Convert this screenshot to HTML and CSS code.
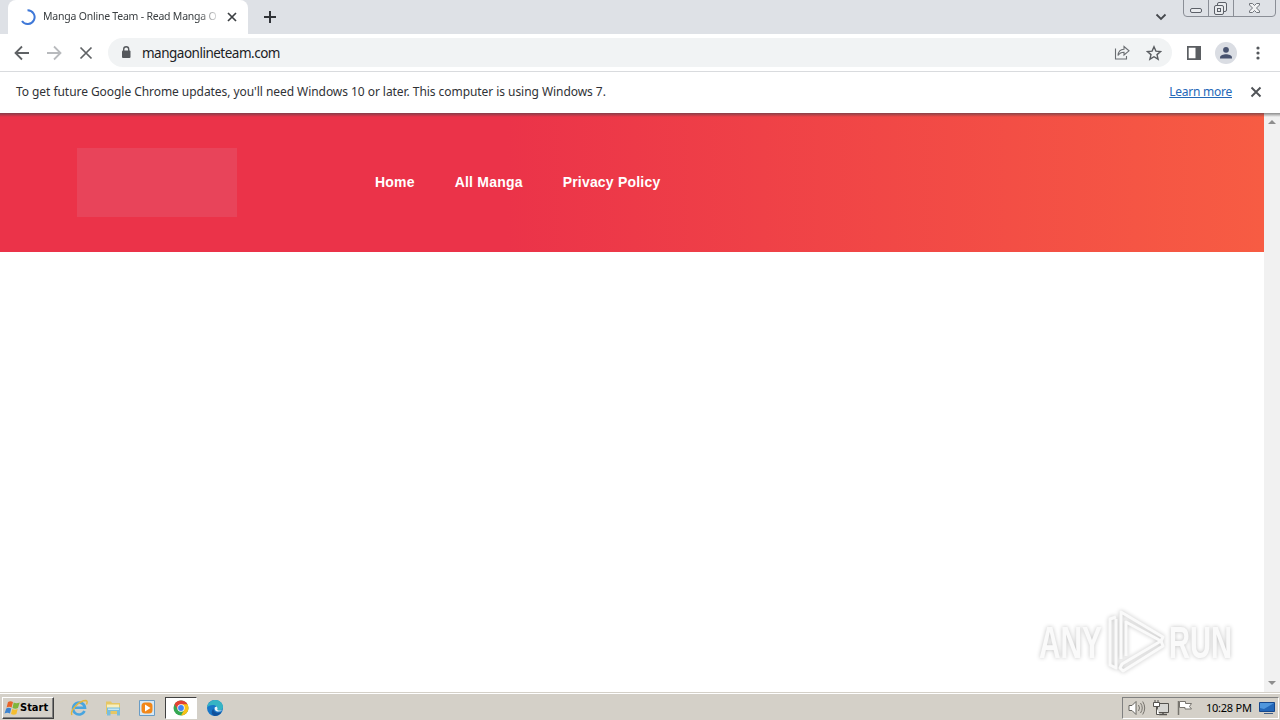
FILE: index.html
```
<!DOCTYPE html>
<html lang="en">
<head>
    <meta charset="UTF-8">
    <meta name="viewport" content="width=device-width, initial-scale=1.0">
    <title>Manga Online Team - Read Manga Online</title>
    <link rel="stylesheet" href="styles.css">
</head>
<body>
    <div class="tabstrip">
        <div class="tab">
            <svg class="spinner" width="16" height="16" viewBox="0 0 16 16"><path d="M7.5 1.2A6.9 6.9 0 1 1 2 12" fill="none" stroke="#3f78d8" stroke-width="2"/></svg>
            <span class="tab-title">Manga Online Team - Read Manga O</span>
            <svg class="tab-close" width="10" height="10" viewBox="0 0 10 10"><path d="M1 1l8 8M9 1L1 9" stroke="#3c4043" stroke-width="1.7"/></svg>
        </div>
        <svg class="new-tab" width="14" height="14" viewBox="0 0 14 14"><path d="M7 1v12M1 7h12" stroke="#303338" stroke-width="2"/></svg>
        <svg class="tab-search" width="12" height="8" viewBox="0 0 12 8"><path d="M1.5 1.5L6 6l4.5-4.5" fill="none" stroke="#45484d" stroke-width="1.8"/></svg>
        <svg class="window-buttons" width="94" height="18" viewBox="0 0 94 18">
            <path d="M.5 0v13q0 3.500 3.500 3.500h85q3.500 0 3.500-3.500V0M25.500 0v16M50.500 0v16" fill="none" stroke="#8a8e96"/>
            <rect x="7.500" y="8.500" width="11" height="4" rx="1.500" fill="#e9ebee" stroke="#5c6068"/>
            <rect x="34.500" y="2.500" width="9" height="9" rx="1.500" fill="#e9ebee" stroke="#5c6068"/>
            <rect x="31.500" y="5.500" width="9" height="9" rx="1.500" fill="#e9ebee" stroke="#5c6068"/>
            <rect x="34.500" y="8.500" width="3" height="3" fill="#e9ebee" stroke="#5c6068"/>
            <path d="M66.500 3.500h3l2 2 2-2h3v1.500l-3 3 3 3v1.500h-3l-2-2-2 2h-3V11l3-3-3-3z" fill="#f1f2f4" stroke="#70747b"/>
        </svg>
    </div>

    <div class="toolbar">
        <svg width="16" height="16" viewBox="0 0 16 16"><path d="M15 8H2M8 1.500L1.500 8 8 14.500" fill="none" stroke="#5f6265" stroke-width="1.8"/></svg>
        <svg width="16" height="16" viewBox="0 0 16 16"><path d="M1 8h13M8 1.500L14.500 8 8 14.500" fill="none" stroke="#b8babd" stroke-width="1.8"/></svg>
        <svg width="16" height="16" viewBox="0 0 16 16"><path d="M2.500 2.500l11 11M13.500 2.500l-11 11" stroke="#5f6265" stroke-width="1.7"/></svg>
        <div class="omnibox">
            <svg width="10" height="13" viewBox="0 0 10 13"><rect x="1" y="4.500" width="8.500" height="7.500" rx="1" fill="#55585c"/><path d="M2.700 5V3.300a2.500 2.500 0 0 1 5 0V5" fill="none" stroke="#55585c" stroke-width="1.4"/></svg>
            <span class="url">mangaonlineteam.com</span>
            <svg class="share" width="16" height="16" viewBox="0 0 16 16"><path d="M1.500 3.500v10.500h11v-3M4 10.500C4.300 6.500 6.500 4.500 10 4.300V1.500l5 4.300-5 4.200V7.300C7.500 7.300 5.500 8.200 4 10.500z" fill="none" stroke="#6b6e72" stroke-width="1.1"/></svg>
            <svg width="16" height="16" viewBox="0 0 16 16"><path d="M8 1.800l1.900 4.300 4.700.4-3.600 3.100 1.100 4.600L8 11.700l-4.100 2.500L5 9.600 1.400 6.500l4.700-.4z" fill="none" stroke="#5a5d61" stroke-width="1.4"/></svg>
        </div>
        <svg class="side-panel" width="14" height="14" viewBox="0 0 14 14"><path d="M0 0h14v14H0zM1.700 1.700v10.600H8.500V1.700z" fill="#5b5e62" fill-rule="evenodd"/></svg>
        <svg class="avatar" width="22" height="22" viewBox="0 0 22 22"><circle cx="11" cy="11" r="11" fill="#dadde3"/><circle cx="11" cy="7.800" r="2.900" fill="#48536f"/><path d="M5 16.500v-1c0-2.300 3.500-3.300 6-3.300s6 1 6 3.300v1z" fill="#48536f"/></svg>
        <svg class="menu" width="4" height="16" viewBox="0 0 4 16"><g fill="#55585c"><circle cx="2" cy="3" r="1.600"/><circle cx="2" cy="8" r="1.600"/><circle cx="2" cy="13" r="1.600"/></g></svg>
    </div>

    <div class="infobar">
        <span class="info-text">To get future Google Chrome updates, you'll need Windows 10 or later. This computer is using Windows 7.</span>
        <a class="learn-more" href="#">Learn more</a>
        <svg width="12" height="12" viewBox="0 0 12 12"><path d="M1.500 1.500l9 9M10.500 1.500l-9 9" stroke="#505357" stroke-width="1.9"/></svg>
    </div>

    <div class="viewport">
        <div class="page">
            <header class="site-header">
                <div class="logo"></div>
                <nav class="site-nav">
                    <a href="#">Home</a>
                    <a href="#">All Manga</a>
                    <a href="#">Privacy Policy</a>
                </nav>
            </header>
        </div>
        <div class="scrollbar">
            <svg width="8" height="4" viewBox="0 0 8 4"><path d="M0 4l4-4 4 4z" fill="#8e8e8e"/></svg>
            <svg width="8" height="4" viewBox="0 0 8 4"><path d="M0 0l4 4 4-4z" fill="#8e8e8e"/></svg>
        </div>
        <svg class="watermark" width="220" height="74" viewBox="0 0 220 74">
            <g class="mark-text">
                <text x="9" y="53" textLength="63" lengthAdjust="spacingAndGlyphs">ANY</text>
                <text x="139" y="53" textLength="63" lengthAdjust="spacingAndGlyphs">RUN</text>
            </g>
            <g class="mark-play">
                <path d="M91 54V7l42 25-2 4-35-19v34"/>
                <path d="M86 12l-6 2v46l6 3V14"/>
                <path d="M92 59l39-23 2 5-40 25-3-3z"/>
            </g>
        </svg>
    </div>

    <div class="taskbar">
        <div class="start">
            <svg width="16" height="16" viewBox="0 0 16 16"><path d="M4 2q2.500-1.700 5 0L7.600 7.500q-2.500-1.500-5 0z" fill="#e8642a"/><path d="M9.700 2.500q2.500 1.500 6 0L14 8q-2.500 1.500-5.500 0z" fill="#7fb53c"/><path d="M2.200 8.500q2.500-1.500 5 0L6 13.500q-2.500-1.500-5.500 0z" fill="#3c83d0"/><path d="M8.200 9q2.500 1.500 5.500 0l-1.300 5q-2.500 1.500-5.400 0z" fill="#f4bd2f"/></svg>
            <span>Start</span>
        </div>
        <div class="quick-launch">
            <div class="task"><svg width="18" height="18" viewBox="0 0 18 18"><path d="M14.500 12A6 6 0 1 1 15 8.800H5" fill="none" stroke="#49a5df" stroke-width="2.6"/><path d="M2 16C-.5 12 9 1.500 16 1.500q2 .5.500 4" fill="none" stroke="#e4b63c" stroke-width="1.4"/></svg></div>
            <div class="task"><svg width="18" height="18" viewBox="0 0 18 18"><path d="M2 2.500h5l1 1.500h8V15H2z" fill="#e6c765"/><path d="M3 5.500h12v4H3z" fill="#f9efbc"/><path d="M3 8.500h13v8h-3V12H6.500v4.500H3z" fill="#79bddd"/><path d="M4 9.500h11V11H4z" fill="#c3e6f3"/></svg></div>
            <div class="task"><svg width="18" height="18" viewBox="0 0 18 18"><path d="M1.500 1.500h15v15h-15z" fill="#d6e8f5" stroke="#699cc5"/><rect x="3.500" y="3.500" width="11" height="11" rx="3.500" fill="#f28718"/><path d="M7 5.500L12.500 9 7 12.500z" fill="#fff"/></svg></div>
            <div class="task active"><svg width="16" height="16" viewBox="0 0 16 16"><circle cx="8" cy="8" r="7.500" fill="#35a853"/><path d="M8 8L1.500 4.250A7.500 7.500 0 0 1 14.500 4.250z" fill="#e34133"/><path d="M8 4.300h6.500A7.500 7.500 0 0 1 8 15.500L11.300 9.700z" fill="#fbc116"/><path d="M1.500 4.250L5 10 9 4.300z" fill="#e34133"/><circle cx="8" cy="8" r="3.700" fill="#fff"/><circle cx="8" cy="8" r="2.900" fill="#4285f4"/></svg></div>
            <div class="task"><svg width="18" height="18" viewBox="0 0 18 18"><circle cx="9" cy="9" r="8" fill="#1877c8"/><path d="M1 8.500C2 3 6 1 9 1c5 0 8 3.500 8 7 0 3-3 4-6 3.300 1.500-3-1-5.300-4-5.300-3 0-5 1-6 2.500z" fill="#36b4c4"/><path d="M7.500 9.500c-.5 3 3 5.500 8 3.500-1.500 2.500-4 4-7 4-3-1-4-4.500-1-7.500z" fill="#10519b"/><path d="M8.800 8.200q-1 3 2.200 4.200 3 .7 5.800-1.400-3 1-5.500 0 .8-2-.5-3.500z" fill="#eef7fa"/></svg></div>
        </div>
        <div class="tray">
            <svg width="18" height="16" viewBox="0 0 18 16"><path d="M1 5.500h3L8 1.500v13l-4-4H1z" fill="#fff" stroke="#66645f"/><path d="M10.500 5q2 3 0 6M12.500 3q3.500 5 0 10M14.700 1.500q4 6.500 0 13" fill="none" stroke="#77746e"/></svg>
            <svg width="18" height="16" viewBox="0 0 18 16"><path d="M5.500 3.500h11v9h-11z" fill="#d6d6d3" stroke="#55534f"/><path d="M7 14.500h8M11 12v3" stroke="#55534f" stroke-width="1.5"/><path d="M1.500 2.500h6v4h-6zM3 0v2M6 0v2M4.500 7v7.500h3" fill="#fff" stroke="#55534f"/></svg>
            <svg width="18" height="16" viewBox="0 0 18 16"><path d="M2.500 1v14" stroke="#77746e" stroke-width="1.5"/><path d="M3.500 1.500h6v2h6l-2 3 2 2.500H9V7.500H3.500z" fill="#fff" stroke="#77746e"/></svg>
            <span class="clock">10:28 PM</span>
            <svg class="desktop" width="16" height="14" viewBox="0 0 16 14"><path d="M.5 1.500h15v9H.5z" fill="#2367b8" stroke="#15478c"/><path d="M1 2h14L5 8 1 7z" fill="#4f96dc"/><path d="M5 12.500h9" stroke="#405e86"/></svg>
        </div>
    </div>
</body>
</html>
```
FILE: styles.css
```
* {
    box-sizing: border-box;
}
body {
    margin: 0;
    width: 1280px;
    height: 720px;
    overflow: hidden;
    display: flex;
    flex-direction: column;
    font-family: "Noto Sans", sans-serif;
    background-color: #fff;
    white-space: nowrap;
}
svg {
    display: block;
    flex: none;
}
.tabstrip {
    display: flex;
    flex: none;
    height: 34px;
    background-color: #dee1e6;
    padding-left: 8px;
}
.tab {
    display: flex;
    align-items: center;
    width: 240px;
    background-color: #fff;
    border-radius: 8px 8px 0 0;
    padding-left: 12px;
}
.tab-title {
    width: 175px;
    margin-left: 7px;
    padding-bottom: 2px;
    font-size: 10.5px;
    letter-spacing: -0.22px;
    color: #3c4043;
    -webkit-mask-image: linear-gradient(to right, #000 155px, transparent 178px);
    mask-image: linear-gradient(to right, #000 155px, transparent 178px);
}
.tab-close {
    margin-left: 9px;
}
.new-tab {
    margin: 10px 0 0 15px;
}
.tab-search {
    margin: 13px 16px 0 auto;
}
.window-buttons {
    margin-right: 3px;
}
.toolbar {
    display: flex;
    flex: none;
    align-items: center;
    gap: 16px;
    height: 38px;
    padding: 0 20px 0 14px;
    border-bottom: 1px solid #d9dbde;
}
.omnibox {
    display: flex;
    align-items: center;
    width: 1064px;
    height: 29px;
    margin-left: -2px;
    padding: 0 10px 0 13px;
    border-radius: 15px;
    background-color: #f1f3f4;
}
.omnibox .share {
    margin: 0 16px 0 auto;
}
.url {
    margin-left: 11px;
    font-size: 13.5px;
    letter-spacing: -0.5px;
    color: #202124;
}
.side-panel {
    margin-left: -1px;
}
.avatar {
    margin-left: -2px;
}
.menu {
    margin-left: 3px;
}
.infobar {
    display: flex;
    flex: none;
    align-items: center;
    height: 41px;
    padding: 0 18px 1px 16px;
    font-size: 12px;
    letter-spacing: -0.055px;
    color: #303236;
}
.info-text {
    padding-bottom: 2px;
}
.learn-more {
    margin-left: auto;
    margin-right: 18px;
    padding-bottom: 2px;
    letter-spacing: -0.25px;
    color: #2468b8;
}
.viewport {
    position: relative;
    display: flex;
    flex: 1;
    min-height: 0;
}
.page {
    flex: 1;
}
.site-header {
    display: flex;
    align-items: center;
    height: 139px;
    padding-left: 77px;
    background: linear-gradient(to bottom, rgba(90, 65, 75, 0.7), transparent 4px), linear-gradient(to right, #eb3349 40%, #f75c43);
}
.logo {
    width: 160px;
    height: 69px;
    background-color: #e8445a;
}
.site-nav {
    display: flex;
    gap: 40px;
    margin-left: 138px;
    padding-bottom: 2px;
    font: bold 14px "Liberation Sans", Arial, sans-serif;
    letter-spacing: 0.2px;
}
.site-nav a {
    color: #fff;
    text-decoration: none;
}
.scrollbar {
    display: flex;
    flex-direction: column;
    align-items: center;
    justify-content: space-between;
    width: 16px;
    padding: 7px 0;
    background: linear-gradient(to bottom, #8c8c8c, #f1f1f1 4px);
}
.watermark {
    position: absolute;
    right: 30px;
    bottom: 13px;
    filter: drop-shadow(0 0 2px rgba(0, 0, 0, 0.24));
}
.mark-text {
    font: bold 44px "Liberation Sans", Arial, sans-serif;
    fill: #fafafa;
}
.mark-play {
    fill: none;
    stroke: #fafafa;
    stroke-width: 3;
    stroke-linejoin: round;
}
.taskbar {
    display: flex;
    flex: none;
    align-items: center;
    height: 28px;
    padding: 2px 1px 0 2px;
    border-top: 1px solid #d4d0c8;
    background-color: #d4d0c8;
    box-shadow: inset 0 1px #fff;
}
.start {
    display: flex;
    align-items: center;
    width: 52px;
    height: 22px;
    padding-left: 1px;
    border: 1px solid;
    border-color: #fff #404040 #404040 #fff;
    box-shadow: inset -1px -1px #808080;
    font: bold 11px "DejaVu Sans Condensed", "DejaVu Sans", sans-serif;
    color: #000;
}
.quick-launch {
    display: flex;
    gap: 2px;
    margin-left: 9px;
}
.task {
    display: flex;
    align-items: center;
    justify-content: center;
    width: 32px;
    height: 22px;
}
.task.active {
    background-color: #fff;
    border: 1px solid;
    border-color: #404040 #fff #fff #404040;
}
.tray {
    display: flex;
    align-items: center;
    gap: 6px;
    width: 157px;
    height: 22px;
    margin-left: auto;
    padding-left: 5px;
    border: 1px solid;
    border-color: #808080 #fff #fff #808080;
}
.clock {
    width: 46px;
    margin-left: 6px;
    padding-bottom: 1px;
    font-size: 11px;
    letter-spacing: -0.25px;
    color: #000;
}
.desktop {
    margin-left: 1px;
}
```
